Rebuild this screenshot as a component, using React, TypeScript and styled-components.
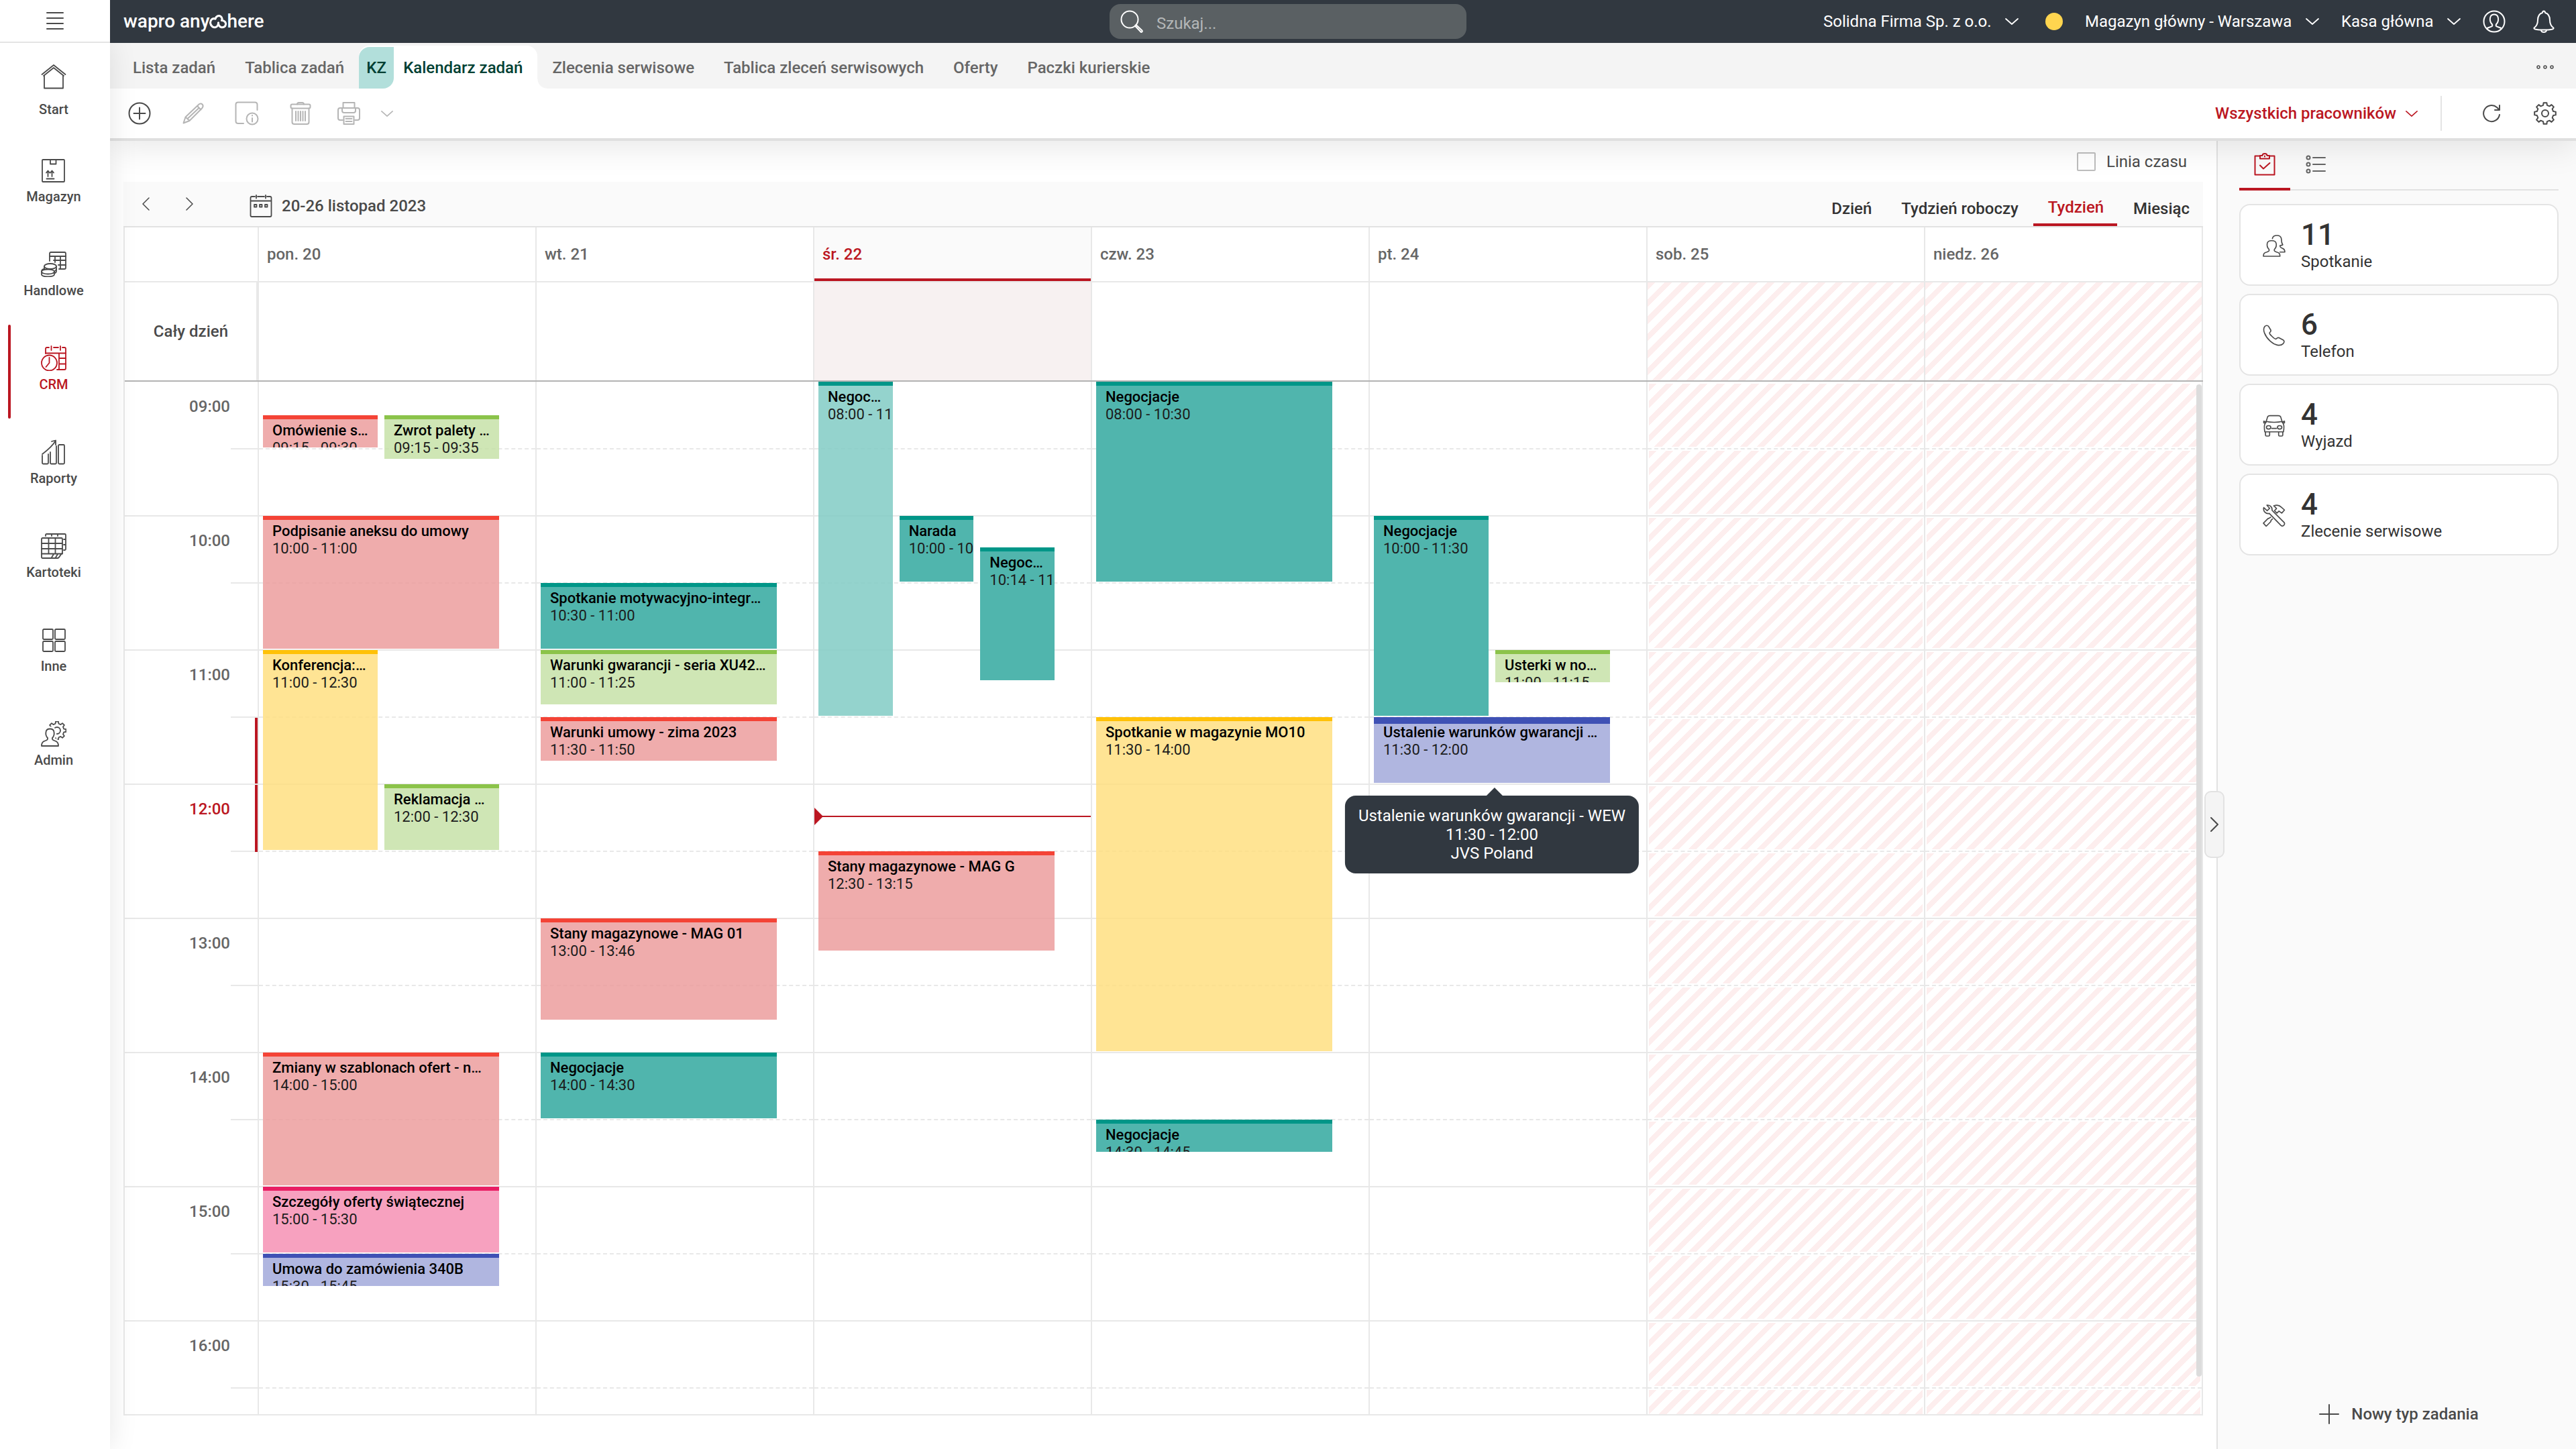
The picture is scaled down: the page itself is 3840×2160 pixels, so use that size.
import React from 'react';
import styled, { createGlobalStyle, css } from 'styled-components';

const color = {
  ink: '#4a4a4a',
  text: '#666666',
  dark: '#333333',
  red: '#bb1722',
  navy: '#313840',
  line: '#e8e8e8',
  muted: '#b5b5b5',
};

const HOUR = 200;
const FIRST_HOUR = 9;

const GlobalStyle = createGlobalStyle`
  *, *::before, *::after { box-sizing: border-box; }
  body { margin: 0; background: #ffffff; }
  body, button, input, select {
    font-family: Roboto, "Liberation Sans", sans-serif;
    font-size: 24px;
    line-height: 32px;
  }
  button { border: 0; padding: 0; background: none; color: inherit; cursor: pointer; }
`;

/* ---------- shared ---------- */

const Svg = styled.svg<{ $w: number; $h?: number; $stroke?: number }>`
  display: block;
  flex: none;
  width: ${(p) => p.$w}px;
  height: ${(p) => p.$h ?? p.$w}px;
  fill: none;
  stroke: currentColor;
  stroke-width: ${(p) => p.$stroke ?? 2};
  stroke-linecap: round;
  stroke-linejoin: round;
`;

function gearPath(cx: number, cy: number, outer: number, inner: number, teeth = 8) {
  const step = (Math.PI * 2) / teeth;
  const points: string[] = [];
  for (let i = 0; i < teeth; i += 1) {
    const a = i * step - Math.PI / 2;
    [
      [inner, -0.3],
      [outer, -0.19],
      [outer, 0.19],
      [inner, 0.3],
    ].forEach(([r, k]) => {
      points.push(`${(cx + r * Math.cos(a + k * step)).toFixed(2)} ${(cy + r * Math.sin(a + k * step)).toFixed(2)}`);
    });
  }
  return `M${points.join('L')}Z`;
}

const ChevronDown = ({ w = 20, h = 10 }: { w?: number; h?: number }) => (
  <Svg $w={w} $h={h} viewBox="0 0 20 10" $stroke={1.8}>
    <path d="M1 1l9 8 9-8" />
  </Svg>
);

/* ---------- page frame ---------- */

const Page = styled.div`
  display: flex;
  flex-direction: column;
  height: 100vh;
  overflow: hidden;
  background: #ffffff;
  color: ${color.ink};
`;

const TopBar = styled.header`
  position: relative;
  z-index: 6;
  flex: none;
  display: grid;
  grid-template-columns: 1fr 532px 1fr;
  align-items: center;
  height: 64px;
  background: ${color.navy};
  color: #ffffff;
`;

const BrandSide = styled.div`
  display: flex;
  align-items: center;
  height: 64px;
  gap: 20px;
`;

const MenuButton = styled.button`
  display: flex;
  align-items: center;
  justify-content: center;
  width: 164px;
  height: 64px;
  background: #ffffff;
  border-bottom: 2px solid #e4e4e4;
  color: ${color.ink};
`;

const Logo = styled.a`
  display: flex;
  align-items: center;
  color: #ffffff;
  text-decoration: none;
  font-size: 28px;
  font-weight: 500;
`;

const Search = styled.label`
  display: flex;
  align-items: center;
  gap: 20px;
  height: 52px;
  padding: 0 16px;
  border-radius: 16px;
  background: #5a6063;
`;

const SearchInput = styled.input`
  flex: 1;
  min-width: 0;
  padding: 6px 0 0;
  border: 0;
  outline: 0;
  background: transparent;
  color: #ffffff;
  &::placeholder { color: #b4b7b8; opacity: 1; }
`;

const AccountSide = styled.div`
  display: flex;
  align-items: center;
  justify-content: flex-end;
  gap: 33px;
  padding-right: 31px;
`;

const Picker = styled.label<{ $accent?: boolean }>`
  display: flex;
  align-items: center;
  gap: ${(p) => (p.$accent ? 14 : 20)}px;
  color: ${(p) => (p.$accent ? color.red : '#ffffff')};
  font-weight: ${(p) => (p.$accent ? 500 : 400)};
`;

const PickerSelect = styled.select`
  appearance: none;
  margin: 0;
  padding: 0;
  border: 0;
  background: transparent;
  color: inherit;
  font-weight: inherit;
`;

const StatusDot = styled.span`
  width: 26px;
  height: 26px;
  margin-left: 7px;
  border-radius: 50%;
  background: #ffd54f;
`;

const TopIcon = styled.button`
  & + & { margin-left: 7px; }
`;

const Shell = styled.div`
  flex: 1;
  min-height: 0;
  display: flex;
`;

/* ---------- side navigation ---------- */

const SideNav = styled.nav`
  position: relative;
  z-index: 5;
  flex: none;
  width: 164px;
  background: #ffffff;
  box-shadow: 0 0 40px rgba(0, 0, 0, 0.1);
`;

const NavItem = styled.a<{ $active?: boolean; $roomy?: boolean }>`
  position: relative;
  display: flex;
  flex-direction: column;
  align-items: center;
  gap: ${(p) => (p.$roomy ? 18 : 8)}px;
  height: 140px;
  padding: 31px 4px 0 0;
  color: ${(p) => (p.$active ? color.red : color.ink)};
  font-size: 20px;
  line-height: 24px;
  font-weight: 500;
  text-decoration: none;
  ${(p) =>
    p.$active &&
    css`
      &::before {
        content: '';
        position: absolute;
        inset: 0 auto 0 12px;
        width: 4px;
        border-radius: 2px;
        background: ${color.red};
      }
    `}
`;

/* ---------- tabs and actions ---------- */

const Workspace = styled.div`
  flex: 1;
  min-width: 0;
  display: flex;
  flex-direction: column;
`;

const Head = styled.div`
  position: relative;
  z-index: 4;
  flex: none;
  border-bottom: 4px solid #dfdfdf;
  background: #ffffff;
  box-shadow: 0 8px 50px rgba(0, 0, 0, 0.1);
`;

const TabStrip = styled.nav`
  display: flex;
  align-items: flex-end;
  height: 68px;
  padding: 0 24px 0 12px;
  background: #f4f4f4;
`;

const Tab = styled.a`
  display: flex;
  align-items: center;
  height: 64px;
  padding: 2px 22px 0;
  color: ${color.text};
  font-weight: 500;
  text-decoration: none;
`;

const ActiveTab = styled.a`
  position: relative;
  display: flex;
  align-items: center;
  height: 64px;
  padding: 2px 22px 0 0;
  border-radius: 16px 16px 0 0;
  background: #ffffff;
  color: #004033;
  font-weight: 500;
  text-decoration: none;
  &::after {
    content: '';
    position: absolute;
    left: 100%;
    bottom: 0;
    width: 14px;
    height: 14px;
    background: radial-gradient(circle at 100% 0, transparent 13px, #ffffff 14px);
  }
`;

const TabBadge = styled.span`
  display: flex;
  align-items: center;
  justify-content: center;
  width: 52px;
  height: 62px;
  margin-right: 14px;
  border-radius: 16px 0 16px 0;
  background: #b2dfdb;
`;

const MoreButton = styled.button`
  display: flex;
  align-items: center;
  justify-content: center;
  width: 44px;
  height: 64px;
  margin-left: auto;
`;

const ActionBar = styled.div`
  display: flex;
  align-items: center;
  height: 74px;
  padding: 0 6px 0 4px;
`;

const Action = styled.button<{ $w?: number; $off?: boolean }>`
  display: flex;
  align-items: center;
  justify-content: center;
  width: ${(p) => p.$w ?? 80}px;
  height: 72px;
  color: ${(p) => (p.$off ? color.muted : color.ink)};
`;

const ActionsEnd = styled.div`
  display: flex;
  align-items: center;
  margin-left: auto;
`;

const Divider = styled.span`
  width: 2px;
  height: 52px;
  margin: 0 34px;
  background: #e4e4e4;
`;

/* ---------- calendar ---------- */

const Main = styled.main`
  flex: 1;
  min-height: 0;
  display: flex;
`;

const CalendarArea = styled.section`
  flex: 1;
  min-width: 0;
  display: flex;
  flex-direction: column;
  padding: 0 20px 50px;
`;

const Options = styled.div`
  flex: none;
  display: flex;
  justify-content: flex-end;
  align-items: center;
  height: 61px;
  padding-right: 24px;
`;

const CheckLabel = styled.label`
  display: flex;
  align-items: center;
  gap: 16px;
`;

const CheckBox = styled.input`
  appearance: none;
  width: 28px;
  height: 28px;
  margin: 0;
  border: 2px solid #bdbdbd;
  border-radius: 2px;
  background: #ffffff;
`;

const CalendarBar = styled.div`
  flex: none;
  display: flex;
  align-items: center;
  height: 68px;
  border-bottom: 2px solid #e2e2e2;
  background: #fafafa;
`;

const Step = styled.button`
  display: flex;
  align-items: center;
  justify-content: center;
  width: 66px;
  height: 66px;
`;

const DateButton = styled.button`
  display: flex;
  align-items: center;
  gap: 14px;
  margin-left: 56px;
  padding-top: 6px;
  font-weight: 500;
`;

const Views = styled.div`
  display: flex;
  gap: 2px;
  margin-left: auto;
`;

const View = styled.button<{ $active?: boolean }>`
  height: 66px;
  padding: 14px 20px 0 22px;
  border-bottom: ${(p) => (p.$active ? `4px solid ${color.red}` : 0)};
  color: ${(p) => (p.$active ? color.red : color.dark)};
  font-weight: 500;
`;

const Frame = styled.div`
  flex: 1;
  min-height: 0;
  display: flex;
  flex-direction: column;
  border-left: 2px solid ${color.line};
  border-bottom: 2px solid ${color.line};
`;

const HeadRow = styled.div<{ $h: number; $strong?: boolean }>`
  flex: none;
  display: flex;
  height: ${(p) => p.$h}px;
  border-bottom: 2px solid ${(p) => (p.$strong ? '#b3b3b3' : color.line)};
`;

const GutterHead = styled.div<{ $thick?: boolean }>`
  flex: none;
  display: flex;
  align-items: center;
  justify-content: flex-end;
  width: 200px;
  padding-right: 42px;
  border-right: ${(p) => (p.$thick ? 4 : 2)}px solid ${color.line};
  font-weight: 500;
`;

const stripes = css`
  background-image: repeating-linear-gradient(135deg, #fdeeee 0 8px, #ffffff 8px 18px);
`;

const DayHead = styled.div<{ $today?: boolean }>`
  flex: 1 1 0;
  min-width: 0;
  display: flex;
  align-items: center;
  padding-left: 12px;
  border-right: 2px solid ${color.line};
  color: ${(p) => (p.$today ? color.red : color.text)};
  font-weight: 500;
  ${(p) =>
    p.$today &&
    css`
      background: #fafafa;
      box-shadow: inset 0 -4px ${color.red};
    `}
`;

const AllDay = styled.div<{ $today?: boolean; $off?: boolean }>`
  flex: 1 1 0;
  min-width: 0;
  border-right: 2px solid ${color.line};
  ${(p) => p.$today && 'background: #f7f1f1;'}
  ${(p) => p.$off && stripes}
`;

const Scroller = styled.div`
  position: relative;
  flex: 1;
  min-height: 0;
  overflow: hidden;
`;

const Timeline = styled.div`
  display: flex;
`;

const Gutter = styled.div`
  flex: none;
  width: 200px;
  padding-top: 1px;
  border-right: 2px solid ${color.line};
`;

const HourSlot = styled.div<{ $half?: boolean; $now?: boolean; $red?: boolean }>`
  height: ${HOUR / 2}px;
  padding: 20px 41px 0 0;
  text-align: right;
  font-weight: 500;
  color: ${(p) => (p.$red ? color.red : color.text)};
  ${(p) =>
    p.$half
      ? `border-bottom: 2px solid ${color.line};`
      : `background: linear-gradient(${color.line}, ${color.line}) right bottom / 40px 2px no-repeat;`}
  ${(p) => p.$now && `box-shadow: inset -4px 0 ${color.red};`}
`;

const DayColumn = styled.div`
  position: relative;
  flex: 1 1 0;
  min-width: 0;
  padding-top: 1px;
  border-right: 2px solid ${color.line};
`;

const Slot = styled.div<{ $half?: boolean; $off?: boolean }>`
  height: ${HOUR / 2}px;
  padding: 2px;
  border-bottom: 2px ${(p) => (p.$half ? 'solid' : 'dashed')} ${color.line};
  ${(p) => p.$off && stripes}
  background-origin: content-box;
  background-clip: content-box;
`;

const EventLayer = styled.div`
  position: absolute;
  inset: 0 54px 0 6px;
`;

const tones = {
  red: ['#f44336', 'rgba(236, 154, 154, 0.82)'],
  green: ['#8bc34a', 'rgba(197, 225, 165, 0.82)'],
  teal: ['#009688', '#50b5ad'],
  mint: ['#009688', 'rgba(128, 203, 196, 0.84)'],
  yellow: ['#ffc107', 'rgba(255, 222, 125, 0.82)'],
  pink: ['#e91e63', '#f7a1bf'],
  indigo: ['#3f51b5', '#b0b6e0'],
} as const;

const EventCard = styled.article<{ $tone: keyof typeof tones; $hover?: boolean }>`
  position: absolute;
  overflow: hidden;
  padding: ${(p) => (p.$hover ? 0 : 4)}px 0 0 14px;
  border-top: ${(p) => (p.$hover ? 10 : 6)}px solid ${(p) => tones[p.$tone][0]};
  background: ${(p) => tones[p.$tone][1]};
  background-clip: padding-box;
  font-size: 22px;
  line-height: 26px;
  color: #1c1c1c;
  white-space: nowrap;
`;

const EventTitle = styled.div`
  overflow: hidden;
  margin-right: 14px;
  text-overflow: ellipsis;
  font-weight: 500;
  color: #000000;
`;

const NowLine = styled.div`
  position: absolute;
  left: 0;
  right: 0;
  height: 2px;
  background: ${color.red};
  &::before {
    content: '';
    position: absolute;
    left: 0;
    top: -12px;
    border-left: 13px solid ${color.red};
    border-top: 13px solid transparent;
    border-bottom: 13px solid transparent;
  }
`;

const Tooltip = styled.div`
  position: absolute;
  z-index: 3;
  left: 50%;
  transform: translateX(-50%);
  padding: 16px 20px;
  border-radius: 16px;
  background: ${color.navy};
  color: #ffffff;
  line-height: 28px;
  text-align: center;
  white-space: nowrap;
  &::before {
    content: '';
    position: absolute;
    left: calc(50% - 8px);
    bottom: 100%;
    border-bottom: 12px solid ${color.navy};
    border-left: 12px solid transparent;
    border-right: 12px solid transparent;
  }
`;

const ScrollThumb = styled.div`
  position: absolute;
  z-index: 2;
  top: 4px;
  right: 2px;
  bottom: 56px;
  width: 8px;
  border-radius: 4px;
  background: #dcdcdc;
`;

/* ---------- task panel ---------- */

const Panel = styled.aside`
  position: relative;
  flex: none;
  display: flex;
  flex-direction: column;
  width: 536px;
  padding: 0 26px 26px 32px;
  border-left: 2px solid #e2e2e2;
  background: #fafafa;
`;

const PanelTabs = styled.div`
  display: flex;
  height: 74px;
  box-shadow: inset 0 -2px #e2e2e2;
`;

const PanelTab = styled.button<{ $active?: boolean }>`
  display: flex;
  align-items: center;
  justify-content: center;
  width: 76px;
  color: ${(p) => (p.$active ? color.red : color.text)};
  border-bottom: 4px solid ${(p) => (p.$active ? color.red : 'transparent')};
`;

const Cards = styled.div`
  display: flex;
  flex-direction: column;
  gap: 12px;
  margin-top: 20px;
`;

const Card = styled.button`
  display: flex;
  align-items: center;
  gap: 23px;
  height: 122px;
  padding: 2px 0 0 33px;
  border: 2px solid #e4e4e4;
  border-radius: 16px;
  background: #ffffff;
  color: ${color.ink};
  text-align: left;
`;

const CardText = styled.span`
  display: flex;
  flex-direction: column;
  color: ${color.dark};
`;

const Count = styled.strong`
  font-size: 44px;
  line-height: 48px;
  font-weight: 500;
`;

const NewType = styled.button`
  display: flex;
  align-items: center;
  justify-content: center;
  gap: 18px;
  height: 52px;
  margin-top: auto;
  font-weight: 500;
`;

const Collapse = styled.button`
  position: absolute;
  z-index: 2;
  left: -20px;
  top: calc(50% - 6px);
  display: flex;
  align-items: center;
  justify-content: center;
  width: 30px;
  height: 100px;
  border: 2px solid #e2e2e2;
  border-radius: 10px;
  background: #f4f4f4;
`;

/* ---------- navigation icons ---------- */

const personPath =
  'M1 37C1 32 2.500 30.500 7 29C10 28 10.500 27 10 25C7 22 7 19 7.500 16C8 12.500 10.500 11.500 13.500 11.500S19 12.500 19.500 16C20 19 20 22 17 25C16.500 27 17 28 20 29C24.500 30.500 26 32 26 37Z';

const navIcons: Record<string, React.ReactNode> = {
  Start: (
    <>
      <path d="M1.500 16L19 2l17.500 14" />
      <path d="M4 18L19 6l15 12" />
      <path d="M5 18v18.500h28V18" />
    </>
  ),
  Magazyn: (
    <>
      <rect x="2" y="3" width="33" height="33" rx="1" />
      <path d="M14 3v6.500h8.500V3" />
      <path d="M10.500 28V20M8 22.500l2.500-3 2.500 3M16.500 28V20M14 22.500l2.500-3 2.500 3M8.500 31.500h11" />
    </>
  ),
  Handlowe: (
    <>
      <path d="M13 14V3q0-2 2-2h20q2 0 2 2v21q0 2-2 2h-8" />
      <path d="M13 7h24M19 13h18M26 20h11M21 7v9M29 7v18" />
      <ellipse cx="14" cy="22" rx="9" ry="4" />
      <path d="M5 22v4c0 5 18 5 18 0v-4" />
      <ellipse cx="10.500" cy="30" rx="9.500" ry="3.500" fill="#fff" />
      <path d="M1 30v4c0 4.500 19 4.500 19 0v-4M5 26c-3 .5-4 2-4 4M23 26v3c0 2-1.500 3-3 3.500" />
    </>
  ),
  CRM: (
    <>
      <path d="M7 12V5q0-2 2-2h3M19 3h7M32 3h3q2 0 2 2v29q0 2-2 2H24" />
      <path d="M15.500 1v6M29 1v6M7 11.500h30M27 11.500V36M27 19h10M27 27.500h10" />
      <circle cx="12.500" cy="26" r="11.500" fill="#fff" />
      <path d="M12.500 18v8l-5 6" />
    </>
  ),
  Raporty: (
    <>
      <path d="M2 24v11q0 1.500 1.500 1.500h6q1.500 0 1.500-1.500V22" />
      <path d="M14 19v16q0 1.500 1.500 1.500h6q1.500 0 1.500-1.500V10" />
      <rect x="26" y="8" width="9" height="28.500" rx="1.500" />
      <path d="M2 22C10 16 17 10 22 2M16 3l6-1.500V8" />
    </>
  ),
  Kartoteki: (
    <>
      <path d="M7 4V2.500Q7 1 8.500 1h27Q37 1 37 2.500v21q0 1.500-1.500 1.500H34M16 1v3M25 1v3M34 9h3M34 17h3" />
      <path d="M2.500 7h28Q32 7 32 8.500V30c-3 0-4 7-7 7H2.500Q1 37 1 35.500v-27Q1 7 2.500 7Z" />
      <path d="M1 15h31M1 23h31M1 30.500h31M11.500 7v23.500M21.500 7v23.500M16 36l3-5M22 36l3-5" />
    </>
  ),
  Inne: (
    <>
      <rect x="3" y="3" width="15" height="15" rx="1.500" />
      <rect x="21" y="3" width="15" height="15" rx="1.500" />
      <rect x="3" y="21" width="15" height="15" rx="1.500" />
      <rect x="21" y="21" width="15" height="15" rx="1.500" />
    </>
  ),
  Admin: (
    <>
      <path d={gearPath(24, 14, 13.5, 10.5)} />
      <circle cx="24" cy="14" r="5" />
      <path d={personPath} stroke="#fff" strokeWidth="7" fill="#fff" />
      <path d={personPath} />
    </>
  ),
};

const navItems = ['Start', 'Magazyn', 'Handlowe', 'CRM', 'Raporty', 'Kartoteki', 'Inne', 'Admin'];

const cards = [
  {
    count: 11,
    label: 'Spotkanie',
    icon: (
      <>
        <path d="M1 31c0-4 1-5 5-6 3-1 4-2 3-4-3-3-3-6-2.500-8.500C7 9.500 9.500 8.500 13 8.500s6 1 6.500 4C20 15 20 18 17 21c-1 2 0 3 3 4 4 1 5 2 5 6Z" />
        <path d="M14 5.500C14.500 2.500 17 1 20.500 1s6 1.500 6.500 5c0 4 1 7 2 8.500-1 1-2 1-4 1 0 3 1 3 3.500 4 3 1 3.500 2.500 3.500 5.500h-7" />
      </>
    ),
  },
  {
    count: 6,
    label: 'Telefon',
    icon: (
      <path d="M3 2.500C4.500 1 7 .5 8.500 2.500l3 5c1 2-.5 3-1.500 4-1 1.500 1 3 3.500 5.500s4.500 4.500 6 3.500c1-1 2-2.500 4-1.500l6 3c2 1.500 2 3.500 0 5.500-4 4-12 2.500-19-4S-1 7 3 2.500Z" />
    ),
  },
  {
    count: 4,
    label: 'Wyjazd',
    icon: (
      <>
        <path d="M5 10L7 3.500C7.500 2 9 1.500 10.500 1.500h12c1.500 0 3 .5 3.500 2L28 10" />
        <path d="M5 10c6 1.500 17 1.500 23 0l2 4c1 2 1 5 0 11H3c-1-6-1-9 0-11ZM5 11L1.500 9.500V12H4M28 11l3.500-1.500V12H29" />
        <ellipse cx="8.500" cy="18.500" rx="3.200" ry="2.500" />
        <ellipse cx="24.500" cy="18.500" rx="3.200" ry="2.500" />
        <path d="M13 20h7M4 25.500v4q0 1.500 1.500 1.500h3q1.500 0 1.500-1.500v-4M23 25.500v4q0 1.500 1.500 1.500h3q1.500 0 1.500-1.500v-4" />
      </>
    ),
  },
  {
    count: 4,
    label: 'Zlecenie serwisowe',
    icon: (
      <>
        <path d="M1.500 4.500l5 4.500 3.500-3.500-4-4.500c4-.5 8 2 7.500 7.500L31 26c2 3-2 6.500-4.500 4.500L9.500 13C5 14 0 10 1.500 4.500Z" />
        <path d="M16 2c4-1.500 8-1 11 2l4.500 4-4 4.500-4-3-3 3-3.500-3.500 3-3C19 4.500 18 3.500 16 2Z" />
        <path d="M11.500 18.500L9 20l-1.500.5L1 27l4 4.500 6.500-6.500.5-2 2-2" />
      </>
    ),
  },
];

/* ---------- calendar data ---------- */

type Task = {
  title: string;
  from: string;
  to: string;
  tone: keyof typeof tones;
  lane?: [number, number];
  hover?: boolean;
};

type Day = { name: string; today?: boolean; off?: boolean; tasks: Task[] };

const days: Day[] = [
  {
    name: 'pon. 20',
    tasks: [
      { title: 'Omówienie spraw', from: '09:15', to: '09:30', tone: 'red', lane: [0, 2] },
      { title: 'Zwrot palety mebli', from: '09:15', to: '09:35', tone: 'green', lane: [1, 2] },
      { title: 'Podpisanie aneksu do umowy', from: '10:00', to: '11:00', tone: 'red' },
      { title: 'Konferencja: nowości', from: '11:00', to: '12:30', tone: 'yellow', lane: [0, 2] },
      { title: 'Reklamacja mebli', from: '12:00', to: '12:30', tone: 'green', lane: [1, 2] },
      { title: 'Zmiany w szablonach ofert - nowe', from: '14:00', to: '15:00', tone: 'red' },
      { title: 'Szczegóły oferty świątecznej', from: '15:00', to: '15:30', tone: 'pink' },
      { title: 'Umowa do zamówienia 340B', from: '15:30', to: '15:45', tone: 'indigo' },
    ],
  },
  {
    name: 'wt. 21',
    tasks: [
      { title: 'Spotkanie motywacyjno-integracyjne', from: '10:30', to: '11:00', tone: 'teal' },
      { title: 'Warunki gwarancji - seria XU4200', from: '11:00', to: '11:25', tone: 'green' },
      { title: 'Warunki umowy - zima 2023', from: '11:30', to: '11:50', tone: 'red' },
      { title: 'Stany magazynowe - MAG 01', from: '13:00', to: '13:46', tone: 'red' },
      { title: 'Negocjacje', from: '14:00', to: '14:30', tone: 'teal' },
    ],
  },
  {
    name: 'śr. 22',
    today: true,
    tasks: [
      { title: 'Negocjacje', from: '08:00', to: '11:30', tone: 'mint', lane: [0, 3] },
      { title: 'Narada', from: '10:00', to: '10:30', tone: 'teal', lane: [1, 3] },
      { title: 'Negocjacje', from: '10:14', to: '11:14', tone: 'teal', lane: [2, 3] },
      { title: 'Stany magazynowe - MAG G', from: '12:30', to: '13:15', tone: 'red' },
    ],
  },
  {
    name: 'czw. 23',
    tasks: [
      { title: 'Negocjacje', from: '08:00', to: '10:30', tone: 'teal' },
      { title: 'Spotkanie w magazynie MO10', from: '11:30', to: '14:00', tone: 'yellow' },
      { title: 'Negocjacje', from: '14:30', to: '14:45', tone: 'teal' },
    ],
  },
  {
    name: 'pt. 24',
    tasks: [
      { title: 'Negocjacje', from: '10:00', to: '11:30', tone: 'teal', lane: [0, 2] },
      { title: 'Usterki w nowej partii', from: '11:00', to: '11:15', tone: 'green', lane: [1, 2] },
      { title: 'Ustalenie warunków gwarancji - WEW', from: '11:30', to: '12:00', tone: 'indigo', hover: true },
    ],
  },
  { name: 'sob. 25', off: true, tasks: [] },
  { name: 'niedz. 26', off: true, tasks: [] },
];

const hours = [9, 10, 11, 12, 13, 14, 15, 16];

const offset = (time: string) => {
  const [h, m] = time.split(':').map(Number);
  return Math.max(0, Math.round(((h - FIRST_HOUR) * 60 + m) * (HOUR / 60)));
};

const laneStyle = ([index, count]: [number, number]) => ({
  left: `calc((100% + 10px) / ${count} * ${index})`,
  width: `calc((100% + 10px) / ${count} - 10px)`,
});

const TaskCard = ({ task }: { task: Task }) => (
  <>
    <EventCard
      $tone={task.tone}
      $hover={task.hover}
      style={{
        top: offset(task.from),
        height: offset(task.to) - offset(task.from) - 2,
        ...laneStyle(task.lane ?? [0, 1]),
      }}
    >
      <EventTitle>{task.title}</EventTitle>
      {task.from} - {task.to}
    </EventCard>
    {task.hover && (
      <Tooltip role="tooltip" style={{ top: offset(task.to) + 17 }}>
        {task.title}
        <br />
        {task.from} - {task.to}
        <br />
        JVS Poland
      </Tooltip>
    )}
  </>
);

const TopPicker = ({ label, value }: { label: string; value: string }) => (
  <Picker>
    <PickerSelect aria-label={label} defaultValue={value}>
      <option>{value}</option>
    </PickerSelect>
    <ChevronDown />
  </Picker>
);

export default function App() {
  return (
    <Page>
      <GlobalStyle />
      <TopBar>
        <BrandSide>
          <MenuButton aria-label="Menu">
            <Svg $w={26} viewBox="0 0 26 26">
              <path d="M1 1h24M1 9h24M1 17h24M1 25h24" />
            </Svg>
          </MenuButton>
          <Logo href="#">
            wapro any
            <Svg $w={26} $h={21} viewBox="0 0 26 21" $stroke={3}>
              <path d="M9 6C4.500 4.500 1.500 8 1.500 12c.5 5 4.500 7.500 8 6.500 3-1 4-4 4-6.500" />
              <path d="M9 6c1-4 5-5.500 8-3.500 2 1.500 2.500 4 1.500 6 4 0 6.500 3 6 6-.5 3.500-4 5-7 4-2.500-1-4-3-4-6.500" />
            </Svg>
            here
          </Logo>
        </BrandSide>
        <Search>
          <Svg $w={34} viewBox="0 0 34 34" $stroke={2}>
            <circle cx="14" cy="14" r="12.500" />
            <path d="M22 23.500l1.500-1.500 9 8.500q1 2-1.500 2.500Z" />
          </Svg>
          <SearchInput type="text" placeholder="Szukaj..." aria-label="Szukaj" />
        </Search>
        <AccountSide>
          <TopPicker label="Firma" value="Solidna Firma Sp. z o.o." />
          <StatusDot />
          <TopPicker label="Magazyn" value="Magazyn główny - Warszawa" />
          <TopPicker label="Kasa" value="Kasa główna" />
          <TopIcon aria-label="Konto">
            <Svg $w={34} viewBox="0 0 34 34">
              <circle cx="17" cy="17" r="15.500" />
              <path d="M6 27.500c2-2 6-2 8-3.500 1-1.500 0-3-1.500-4.500C11 17 10.500 13 11.500 10c1-2.500 3-3.500 5.500-3.500s4.500 1 5.500 3.500c1 3 .5 7-1 9.500C20 21 19 22.500 20 24c2 1.500 6 1.500 8 3.500" />
            </Svg>
          </TopIcon>
          <TopIcon aria-label="Powiadomienia">
            <Svg $w={34} viewBox="0 0 34 34">
              <path d="M17 1.500c1.500 0 2 1 2 2.500 5 1.500 7 6 7 11 0 6 1.500 9 5.500 11.500 1 2.500-6 3-14.500 3s-15.500-.5-14.500-3C6.500 24 8 21 8 15c0-5 2-9.500 7-11 0-1.500.5-2.500 2-2.500Z" />
              <path d="M13 30c.5 4 7.500 4 8 0" />
            </Svg>
          </TopIcon>
        </AccountSide>
      </TopBar>

      <Shell>
        <SideNav>
          {navItems.map((name) => (
            <NavItem key={name} href="#" $active={name === 'CRM'} $roomy={name === 'Start'}>
              <Svg $w={38} viewBox="0 0 38 38" $stroke={1.8}>
                {navIcons[name]}
              </Svg>
              {name}
            </NavItem>
          ))}
        </SideNav>

        <Workspace>
          <Head>
            <TabStrip>
              <Tab href="#">Lista zadań</Tab>
              <Tab href="#">Tablica zadań</Tab>
              <ActiveTab href="#">
                <TabBadge>KZ</TabBadge>
                Kalendarz zadań
              </ActiveTab>
              <Tab href="#">Zlecenia serwisowe</Tab>
              <Tab href="#">Tablica zleceń serwisowych</Tab>
              <Tab href="#">Oferty</Tab>
              <Tab href="#">Paczki kurierskie</Tab>
              <MoreButton aria-label="Więcej">
                <Svg $w={28} $h={8} viewBox="0 0 28 8" $stroke={1.5}>
                  <circle cx="4" cy="4" r="2" />
                  <circle cx="14" cy="4" r="2" />
                  <circle cx="24" cy="4" r="2" />
                </Svg>
              </MoreButton>
            </TabStrip>
            <ActionBar>
              <Action aria-label="Dodaj">
                <Svg $w={34} viewBox="0 0 34 34">
                  <circle cx="17" cy="17" r="15.500" />
                  <path d="M17 8.500v17M8.500 17h17" />
                </Svg>
              </Action>
              <Action $off aria-label="Edytuj">
                <Svg $w={32} viewBox="0 0 32 32" $stroke={2}>
                  <path d="M1.500 30.500l3-9L24 3c4-4 9 1 5 5.500L10.500 27ZM4.500 21.500l6 5.500M22 5l5.500 5.500M8 23.500L24.500 8" />
                </Svg>
              </Action>
              <Action $off aria-label="Informacje">
                <Svg $w={36} viewBox="0 0 36 36">
                  <path d="M13 33H5q-3.500 0-3.500-3.500v-25Q1.500 1.500 5 1.500h25q3.500 0 3.500 3.500v8" />
                  <circle cx="26" cy="26" r="8.500" />
                  <path d="M26 25v5.500M26 21v.5" />
                </Svg>
              </Action>
              <Action $off aria-label="Usuń">
                <Svg $w={34} viewBox="0 0 34 34">
                  <rect x="2.500" y="3.500" width="29" height="6" rx="2" />
                  <path d="M12 3.500q0-2.500 2.500-2.500h5Q22 1 22 3.500M4.500 9.500V30q0 3 3 3h19q3 0 3-3V9.500" />
                  <path d="M10 14v14M13.500 14v14M17 14v14M20.500 14v14M24 14v14" />
                </Svg>
              </Action>
              <Action $off $w={64} aria-label="Drukuj">
                <Svg $w={34} viewBox="0 0 34 34">
                  <path d="M8.500 9V1h17v8" />
                  <path d="M8 27H4q-3 0-3-3V12q0-3 3-3h3v4q0 3 3 3h14q3 0 3-3V9h3q3 0 3 3v12q0 3-3 3h-4M7 9h20" />
                  <path d="M9.500 21.500h15V33h-15ZM12.500 25h9M12.500 29h9" />
                </Svg>
              </Action>
              <Action $off $w={50} aria-label="Więcej opcji druku">
                <ChevronDown w={18} h={9} />
              </Action>
              <ActionsEnd>
                <Picker $accent>
                  <PickerSelect aria-label="Pracownicy" defaultValue="all">
                    <option value="all">Wszystkich pracowników</option>
                  </PickerSelect>
                  <ChevronDown w={18} h={9} />
                </Picker>
                <Divider />
                <Action $w={80} aria-label="Odśwież">
                  <Svg $w={28} viewBox="0 0 28 28">
                    <path d="M26 16A12 12 0 1 1 22 5l4 4M26 2v7h-7" />
                  </Svg>
                </Action>
                <Action $w={80} aria-label="Ustawienia">
                  <Svg $w={36} viewBox="0 0 36 36">
                    <path d={gearPath(18, 18, 16, 12.5)} />
                    <circle cx="18" cy="18" r="5" />
                  </Svg>
                </Action>
              </ActionsEnd>
            </ActionBar>
          </Head>

          <Main>
            <CalendarArea>
              <Options>
                <CheckLabel>
                  <CheckBox type="checkbox" />
                  Linia czasu
                </CheckLabel>
              </Options>
              <CalendarBar>
                <Step aria-label="Poprzedni tydzień">
                  <Svg $w={12} $h={20} viewBox="0 0 12 20" $stroke={1.5}>
                    <path d="M11 1L2 10l9 9" />
                  </Svg>
                </Step>
                <Step aria-label="Następny tydzień">
                  <Svg $w={12} $h={20} viewBox="0 0 12 20" $stroke={1.5}>
                    <path d="M1 1l9 9-9 9" />
                  </Svg>
                </Step>
                <DateButton>
                  <Svg $w={34} viewBox="0 0 34 34" $stroke={1.8}>
                    <path d="M8 3H3.500Q1.500 3 1.500 5v26q0 2 2 2h27q2 0 2-2V5q0-2-2-2H26M12 3h10M10 1v4.500M24 1v4.500M1.500 9.500h31" />
                    <path d="M7 15h3.500v3.500H7ZM15 15h3.500v3.500H15ZM23 15h3.500v3.500H23Z" />
                  </Svg>
                  20-26 listopad 2023
                </DateButton>
                <Views>
                  <View>Dzień</View>
                  <View>Tydzień roboczy</View>
                  <View $active>Tydzień</View>
                  <View>Miesiąc</View>
                </Views>
              </CalendarBar>

              <Frame>
                <HeadRow $h={82}>
                  <GutterHead />
                  {days.map((day) => (
                    <DayHead key={day.name} $today={day.today}>
                      {day.name}
                    </DayHead>
                  ))}
                </HeadRow>
                <HeadRow $h={148} $strong>
                  <GutterHead $thick>Cały dzień</GutterHead>
                  {days.map((day) => (
                    <AllDay key={day.name} $today={day.today} $off={day.off} />
                  ))}
                </HeadRow>
                <Scroller>
                  <Timeline>
                    <Gutter>
                      {hours.map((h) => (
                        <React.Fragment key={h}>
                          <HourSlot $now={h === 12} $red={h === 12}>
                            {String(h).padStart(2, '0')}:00
                          </HourSlot>
                          <HourSlot $half $now={h === 11} />
                        </React.Fragment>
                      ))}
                    </Gutter>
                    {days.map((day) => (
                      <DayColumn key={day.name}>
                        {hours.map((h) => (
                          <React.Fragment key={h}>
                            <Slot $off={day.off} />
                            <Slot $half $off={day.off} />
                          </React.Fragment>
                        ))}
                        <EventLayer>
                          {day.tasks.map((task) => (
                            <TaskCard key={task.title + task.from} task={task} />
                          ))}
                        </EventLayer>
                        {day.today && <NowLine style={{ top: offset('12:14') }} />}
                      </DayColumn>
                    ))}
                  </Timeline>
                  <ScrollThumb />
                </Scroller>
              </Frame>
            </CalendarArea>

            <Panel>
              <Collapse aria-label="Zwiń panel">
                <Svg $w={14} $h={24} viewBox="0 0 14 24">
                  <path d="M2 2l10 10L2 22" />
                </Svg>
              </Collapse>
              <PanelTabs>
                <PanelTab $active aria-label="Typy zadań">
                  <Svg $w={32} $h={34} viewBox="0 0 32 34">
                    <path d="M9 4.500H1.500V32.500h29V4.500H23" />
                    <path d="M9 4h3.500c0-4 7-4 7 0H23v4.500H9ZM16 4.500v1M9 18.500l5 5L23.500 15" />
                  </Svg>
                </PanelTab>
                <PanelTab aria-label="Lista">
                  <Svg $w={30} $h={28} viewBox="0 0 30 28">
                    <circle cx="4" cy="4" r="2.500" />
                    <circle cx="4" cy="14" r="2.500" />
                    <circle cx="4" cy="24" r="2.500" />
                    <path d="M11 4h18M11 14h18M11 24h18" />
                  </Svg>
                </PanelTab>
              </PanelTabs>
              <Cards>
                {cards.map((card) => (
                  <Card key={card.label}>
                    <Svg $w={34} $h={33} viewBox="0 0 33 32" $stroke={1.6}>
                      {card.icon}
                    </Svg>
                    <CardText>
                      <Count>{card.count}</Count>
                      {card.label}
                    </CardText>
                  </Card>
                ))}
              </Cards>
              <NewType>
                <Svg $w={30} viewBox="0 0 30 30">
                  <path d="M15 1v28M1 15h28" />
                </Svg>
                Nowy typ zadania
              </NewType>
            </Panel>
          </Main>
        </Workspace>
      </Shell>
    </Page>
  );
}
